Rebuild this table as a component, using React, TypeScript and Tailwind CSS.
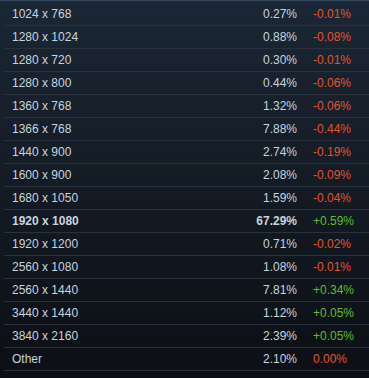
import React from "react";

const rows: [string, string, string, boolean?][] = [
  ["1024 x 768", "0.27%", "-0.01%"],
  ["1280 x 1024", "0.88%", "-0.08%"],
  ["1280 x 720", "0.30%", "-0.01%"],
  ["1280 x 800", "0.44%", "-0.06%"],
  ["1360 x 768", "1.32%", "-0.06%"],
  ["1366 x 768", "7.88%", "-0.44%"],
  ["1440 x 900", "2.74%", "-0.19%"],
  ["1600 x 900", "2.08%", "-0.09%"],
  ["1680 x 1050", "1.59%", "-0.04%"],
  ["1920 x 1080", "67.29%", "+0.59%", true],
  ["1920 x 1200", "0.71%", "-0.02%"],
  ["2560 x 1080", "1.08%", "-0.01%"],
  ["2560 x 1440", "7.81%", "+0.34%"],
  ["3440 x 1440", "1.12%", "+0.05%"],
  ["3840 x 2160", "2.39%", "+0.05%"],
  ["Other", "2.10%", "0.00%"],
];

export default function App() {
  return (
    <div
      className="w-[369px] h-[378px] overflow-hidden border-t border-[#34495e] pt-[2px] bg-gradient-to-b from-[#1b2735] to-[#0c0f14] text-[12px] text-[#c6d4df]"
      style={{ fontFamily: '"Liberation Sans", Arial, sans-serif' }}
    >
      {rows.map(([name, pct, chg, bold]) => (
        <div
          key={name}
          className={`ml-1 flex h-[23px] items-center border-b border-[#28313c] leading-none ${bold ? "font-bold" : ""}`}
        >
          <div className="flex-1 pl-2">{name}</div>
          <div className="text-right">{pct}</div>
          <div
            className={`ml-4 w-[56px] font-normal ${chg.startsWith("+") ? "text-[#5fbd2a]" : "text-[#e4532b]"}`}
          >
            {chg}
          </div>
        </div>
      ))}
    </div>
  );
}
